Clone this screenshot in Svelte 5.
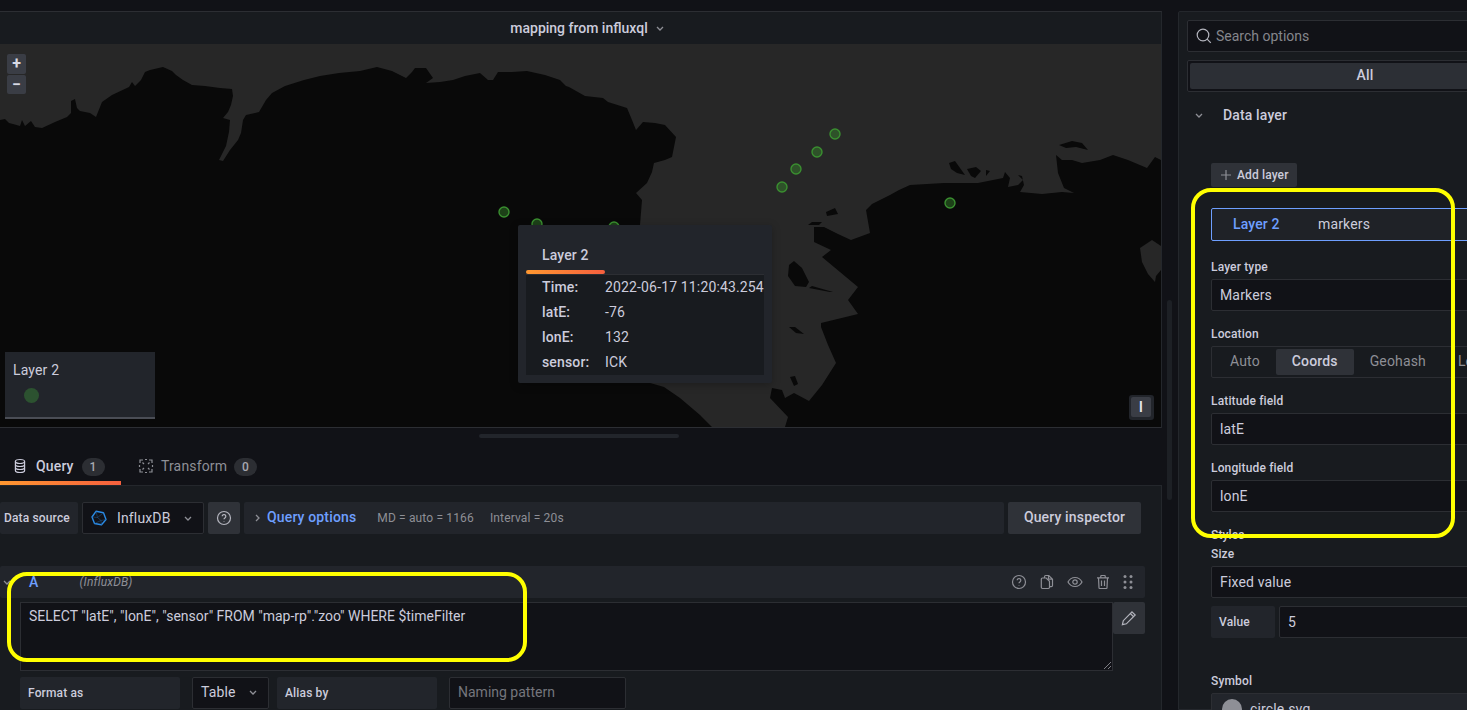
<script lang="ts">
	const markers = [
		[835, 134],
		[817, 152],
		[796, 169],
		[782, 187],
		[950, 203],
		[504, 212],
		[537, 224],
		[614, 227]
	];

	const tooltipRows = [
		['Time:', '2022-06-17 11:20:43.254'],
		['latE:', '-76'],
		['lonE:', '132'],
		['sensor:', 'ICK']
	];

	const westLand =
		'M0 120 L5 119 L9 123 L13 124 L20 126 L22 120 L25 126 L31 121 L35 127 L42 128 L55 122 L67 117 L71 113 L71 101 L75 99 L77 108 L80 111 L90 113 L96 117 L102 102 L112 95 L129 87 L132 82 L135 86 L141 80 L145 72 L150 70 L163 67 L172 71 L176 75 L183 80 L192 85 L205 86 L220 88 L232 89 L233 96 L231 105 L228 112 L223 118 L230 120 L229 132 L226 146 L219 160 L223 161 L230 150 L238 140 L241 133 L243 120 L246 115 L259 112 L266 100 L272 93 L285 86 L304 80 L320 76 L339 73 L360 71 L377 67 L392 71 L406 78 L412 72 L415 68 L426 68 L433 78 L426 83 L440 82 L453 80 L465 76 L480 73 L488 80 L493 80 L498 72 L512 72 L527 71 L545 75 L560 80 L566 86 L569 87 L585 96 L603 98 L608 102 L627 108 L632 120 L636 130 L643 122 L655 123 L665 125 L676 137 L672 157 L665 160 L654 163 L652 172 L647 183 L636 193 L642 200 L640 225 L640 380 L664 387 L680 398 L700 415 L712 427 L0 427 Z';

	const eastLand =
		'M785 427 L788 417 L770 398 L772 388 L782 390 L785 398 L794 393 L809 401 L822 385 L836 363 L828 345 L821 327 L821 323 L858 314 L848 300 L858 287 L840 272 L822 257 L831 250 L814 242 L814 227 L824 227 L838 234 L851 240 L870 233 L866 210 L872 204 L890 195 L899 190 L910 185 L944 183 L978 183 L1003 178 L1005 172 L1010 178 L1008 187 L1018 185 L1023 180 L1018 175 L1022 176 L1024 185 L1020 192 L1042 194 L1062 192 L1074 193 L1064 188 L1058 173 L1056 155 L1062 160 L1072 160 L1082 163 L1100 160 L1113 155 L1128 160 L1147 168 L1155 157 L1161 160 L1161 427 Z';

	const seaPatch = 'M1140 248 L1152 240 L1161 246 L1161 270 L1156 276 L1155 282 L1148 274 L1142 262 Z';

	const islands = [
		'M949 163 L955 161 L960 168 L965 175 L957 173 L951 169 Z',
		'M967 169 L976 167 L981 171 L975 178 L971 176 Z',
		'M986 170 L990 171 L986 176 Z',
		'M1059 145 L1072 141 L1082 143 L1088 150 L1076 147 L1066 148 Z',
		'M789 265 L794 261 L802 268 L809 282 L806 287 L795 286 L788 276 Z',
		'M789 327 L795 327 L804 334 L796 333 Z',
		'M790 377 L795 376 L798 384 L794 386 Z',
		'M809 288 L812 286 L833 292 L830 292 Z',
		'M812 222 L822 222 L819 225 L808 225 Z',
		'M826 212 L835 208 L838 214 L827 216 Z'
	];
</script>

<div class="screen">
	<div class="left">
		<section class="panel">
			<header class="panel-title">
				<span>mapping from influxql</span>
				<svg class="chev" viewBox="0 0 10 10" width="10" height="10"><path d="M2 4l3 3 3-3" /></svg>
			</header>

			<div class="map">
				<svg class="map-svg" viewBox="0 44 1161 383" preserveAspectRatio="none">
					<path d={westLand} fill="#090909" />
					<path d={eastLand} fill="#090909" />
					<path d={seaPatch} fill="#272727" />
					{#each islands as d}
						<path {d} fill="#090909" />
					{/each}
					{#each markers as [cx, cy]}
						<circle {cx} {cy} r="5" fill="#37872d" fill-opacity="0.45" stroke="#3a8f30" stroke-width="1.4" />
					{/each}
				</svg>

				<div class="zoom">
					<button type="button">+</button>
					<button type="button">−</button>
				</div>

				<div class="legend">
					<div class="legend-name">Layer 2</div>
					<span class="legend-dot"></span>
				</div>

				<div class="tooltip">
					<div class="tooltip-tab">Layer 2</div>
					<div class="tooltip-body">
						{#each tooltipRows as [label, value]}
							<div class="tooltip-row">
								<span class="tooltip-label">{label}</span>
								<span>{value}</span>
							</div>
						{/each}
					</div>
				</div>

				<div class="attribution"><span>I</span></div>
			</div>
		</section>

		<div class="splitter"><span></span></div>

		<nav class="tabs">
			<div class="tab active">
				<svg viewBox="0 0 16 16" width="16" height="16" class="icon">
					<ellipse cx="8" cy="3.5" rx="4.6" ry="2" />
					<path d="M3.4 3.5v9c0 1.1 2 2 4.6 2s4.6-.9 4.6-2v-9M3.4 6.5c0 1.1 2 2 4.6 2s4.6-.9 4.6-2M3.4 9.5c0 1.1 2 2 4.6 2s4.6-.9 4.6-2" />
				</svg>
				<span>Query</span>
				<span class="badge">1</span>
			</div>
			<div class="tab second">
				<svg viewBox="0 0 16 16" width="16" height="16" class="icon">
					<path d="M2 5V2h3M11 2h3v3M14 11v3h-3M5 14H2v-3M4.500 4.500L6 6M11.500 4.500L10 6M4.500 11.500L6 10M11.500 11.500L10 10M7 1.500h2M7 14.500h2M1.500 7v2M14.500 7v2" />
				</svg>
				<span>Transform</span>
				<span class="badge">0</span>
			</div>
		</nav>

		<section class="query-panel">
			<div class="source-row">
				<div class="label source-label">Data source</div>
				<div class="select source-select">
					<svg viewBox="0 0 16 16" width="16" height="16" class="influx">
						<path d="M5 1.300L12.500 2.800 15 9.500 10.500 14.800 3.500 13.500 1 7Z" />
						<path class="thin" d="M5 1.300L6.500 7.500 1 7M6.500 7.500L12.500 2.800M6.500 7.500L10 10.500 15 9.500M10 10.500L10.500 14.800M10 10.500L3.500 13.500" />
					</svg>
					<span>InfluxDB</span>
					<svg class="chev" viewBox="0 0 10 10" width="10" height="10"><path d="M2 4l3 3 3-3" /></svg>
				</div>
				<button type="button" class="icon-btn">
					<svg viewBox="0 0 16 16" width="16" height="16" class="icon light">
						<circle cx="8" cy="8" r="6.500" />
						<path d="M6.200 6.300a1.800 1.800 0 1 1 2.700 1.600c-.6.400-.9.700-.9 1.400M8 11.200v.6" />
					</svg>
				</button>
				<div class="options-bar">
					<svg class="chev side" viewBox="0 0 10 10" width="10" height="10"><path d="M4 2l3 3-3 3" /></svg>
					<span class="options-title">Query options</span>
					<span class="options-meta first">MD = auto = 1166</span>
					<span class="options-meta">Interval = 20s</span>
				</div>
				<button type="button" class="inspector">Query inspector</button>
			</div>

			<div class="query-head">
				<svg class="chev a-chev" viewBox="0 0 10 10" width="10" height="10"><path d="M2 4l3 3 3-3" /></svg>
				<span class="ref">A</span>
				<span class="ds-name">(InfluxDB)</span>
				<div class="head-icons">
					<svg viewBox="0 0 16 16" width="16" height="16" class="icon">
						<circle cx="8" cy="8" r="6.500" />
						<path d="M6.200 6.300a1.800 1.800 0 1 1 2.700 1.600c-.6.400-.9.700-.9 1.400M8 11.200v.6" />
					</svg>
					<svg viewBox="0 0 16 16" width="16" height="16" class="icon">
						<path d="M5.500 4V2.800c0-.7.500-1.300 1.200-1.300h3.100l3.700 3.700v6.300c0 .7-.5 1.200-1.200 1.200h-1.300M9.500 1.500v3.700h4" />
						<path d="M3.500 4h3.700l3.300 3.300v6c0 .7-.5 1.200-1.200 1.200H3.500c-.7 0-1.200-.5-1.200-1.200V5.200C2.300 4.500 2.800 4 3.500 4Z" />
					</svg>
					<svg viewBox="0 0 16 16" width="16" height="16" class="icon">
						<path d="M1 8c1.600-3 4-4.500 7-4.500S13.400 5 15 8c-1.600 3-4 4.500-7 4.500S2.600 11 1 8Z" />
						<circle cx="8" cy="8" r="2.200" />
					</svg>
					<svg viewBox="0 0 16 16" width="16" height="16" class="icon">
						<path d="M2 3.800h12M5.800 3.800V2c0-.3.200-.5.500-.5h3.400c.3 0 .5.200.5.500v1.800M3.500 3.800l.5 10c0 .4.300.7.700.7h6.600c.4 0 .7-.3.700-.7l.5-10M6.500 6.500v5.500M9.500 6.500v5.500" />
					</svg>
					<svg viewBox="0 0 16 16" width="16" height="16" class="dots">
						<circle cx="5" cy="2.500" r="1.500" /><circle cx="11" cy="2.500" r="1.500" />
						<circle cx="5" cy="8" r="1.500" /><circle cx="11" cy="8" r="1.500" />
						<circle cx="5" cy="13.500" r="1.500" /><circle cx="11" cy="13.500" r="1.500" />
					</svg>
				</div>
			</div>

			<div class="editor-row">
				<div class="editor">
					<span>SELECT "latE", "lonE", "sensor" FROM "map-rp"."zoo" WHERE $timeFilter</span>
					<svg class="resizer" viewBox="0 0 8 8" width="8" height="8"><path d="M1 8l7-7M5 8l3-3" /></svg>
				</div>
				<button type="button" class="icon-btn edit">
					<svg viewBox="0 0 16 16" width="16" height="16" class="icon light">
						<path d="M11 1.800l3.200 3.200-8.800 8.800-4 .9.900-4ZM9.300 3.500l3.200 3.200" />
					</svg>
				</button>
			</div>

			<div class="format-row">
				<div class="label format-label">Format as</div>
				<div class="select table-select">
					<span>Table</span>
					<svg class="chev" viewBox="0 0 10 10" width="10" height="10"><path d="M2 4l3 3 3-3" /></svg>
				</div>
				<div class="label alias-label">Alias by</div>
				<div class="select alias-input"><span>Naming pattern</span></div>
			</div>
		</section>
	</div>

	<div class="gutter"><span></span></div>

	<aside class="options">
		<div class="search">
			<svg viewBox="0 0 16 16" width="16" height="16" class="icon light">
				<circle cx="7" cy="7" r="5.800" />
				<path d="M11.200 11.200L14.800 14.800" />
			</svg>
			<span>Search options</span>
		</div>
		<div class="filter"><div>All</div></div>

		<div class="group-title">
			<svg class="chev" viewBox="0 0 10 10" width="10" height="10"><path d="M2 4l3 3 3-3" /></svg>
			<span>Data layer</span>
		</div>

		<div class="fields">
			<button type="button" class="add-layer">
				<svg viewBox="0 0 12 12" width="12" height="12" class="icon"><path d="M6 1v10M1 6h10" /></svg>
				Add layer
			</button>

			<div class="layer-row">
				<span class="layer-name">Layer 2</span>
				<span>markers</span>
			</div>

			<div class="field first"><div class="field-label">Layer type</div><div class="select wide">Markers</div></div>

			<div class="field">
				<div class="field-label">Location</div>
				<div class="radio">
					<span>Auto</span>
					<span class="on">Coords</span>
					<span>Geohash</span>
					<span>Lookup</span>
				</div>
			</div>

			<div class="field"><div class="field-label">Latitude field</div><div class="select wide">latE</div></div>
			<div class="field"><div class="field-label">Longitude field</div><div class="select wide">lonE</div></div>

			<div class="field-label styles-title">Styles</div>
			<div class="field size"><div class="field-label">Size</div><div class="select wide">Fixed value</div></div>

			<div class="value-row">
				<div class="label value-label">Value</div>
				<div class="select value-input">5</div>
			</div>

			<div class="field symbol">
				<div class="field-label">Symbol</div>
				<div class="select wide symbol-select"><span class="symbol-dot"></span>circle.svg</div>
			</div>
		</div>
	</aside>

	<div class="mark mark-query"></div>
	<div class="mark mark-layer"></div>
</div>

<style>
	:global(body) {
		background: #111217;
		overflow: hidden;
	}

	.screen {
		position: relative;
		display: flex;
		width: 1467px;
		height: 710px;
		overflow: hidden;
		background: #111217;
		color: #ccccdc;
		font-family: Roboto, 'Liberation Sans', sans-serif;
		font-size: 14px;
		letter-spacing: 0.01071em;
	}

	.left {
		flex: none;
		width: 1162px;
		padding-top: 11px;
		box-sizing: border-box;
	}

	.panel {
		border-top: 1px solid #2c2e33;
		border-right: 1px solid #24272c;
	}

	.panel-title {
		display: flex;
		align-items: center;
		justify-content: center;
		gap: 7px;
		height: 32px;
		padding: 0 0 1px 14px;
		box-sizing: border-box;
		background: #181b1f;
		font-weight: 500;
		letter-spacing: 0;
	}

	.chev {
		flex: none;
		fill: none;
		stroke: #8e8f96;
		stroke-width: 1.300;
	}

	.map {
		position: relative;
		height: 383px;
		background: #272727;
		border-bottom: 1px solid #2c2e33;
		overflow: hidden;
	}

	.map-svg {
		display: block;
		width: 100%;
		height: 100%;
	}

	.zoom {
		position: absolute;
		left: 7px;
		top: 10px;
		display: grid;
		gap: 1px;
	}

	.zoom button {
		width: 19px;
		height: 19.500px;
		padding: 0;
		border: none;
		border-radius: 2px;
		background: #3a3d45;
		color: #d8d9e4;
		font: 700 16px/19px Roboto, sans-serif;
	}

	.legend {
		position: absolute;
		left: 5px;
		top: 308px;
		width: 150px;
		height: 67px;
		box-sizing: border-box;
		padding: 10px 8px 0;
		background: #22252b;
		border-bottom: 2px solid #4a4d55;
	}

	.legend-name {
		line-height: 16px;
	}

	.legend-dot {
		display: block;
		width: 15px;
		height: 15px;
		margin: 10px 0 0 11px;
		border-radius: 50%;
		background: #2c5230;
	}

	.tooltip {
		position: absolute;
		left: 518px;
		top: 181px;
		width: 254px;
		height: 158px;
		box-sizing: border-box;
		padding: 0 8px;
		background: #22252b;
		box-shadow: 0 2px 8px rgb(0 0 0 / 0.25);
		border-radius: 2px;
	}

	.tooltip-tab {
		position: relative;
		height: 49px;
		padding: 21px 0 0 16px;
		box-sizing: border-box;
		line-height: 18px;
		font-weight: 500;
	}

	.tooltip-tab::after {
		content: '';
		position: absolute;
		left: 0;
		bottom: 0;
		width: 79px;
		height: 4px;
		border-radius: 2px;
		background: linear-gradient(90deg, #ff9830, #f55f3e);
	}

	.tooltip-body {
		height: 101px;
		box-sizing: border-box;
		padding-left: 16px;
		background: #181b1f;
		border-top: 1px solid #2c2e33;
		white-space: nowrap;
	}

	.tooltip-row {
		display: flex;
		height: 25px;
		line-height: 25px;
	}

	.tooltip-label {
		width: 63px;
		font-weight: 500;
	}

	.attribution {
		position: absolute;
		left: 1129px;
		top: 351px;
		display: flex;
		padding: 2px 3px 3px 2px;
		background: #22252b;
		border-radius: 3px;
	}

	.attribution span {
		width: 20px;
		height: 20px;
		border-radius: 2px;
		background: #3a3d45;
		color: #e6e7f0;
		text-align: center;
		font: 500 15px/20px Roboto, sans-serif;
	}

	.splitter {
		display: flex;
		justify-content: center;
		height: 20px;
		padding: 6px 4px 0 0;
		box-sizing: border-box;
	}

	.splitter span {
		width: 200px;
		height: 4px;
		background: #22252b;
		border-radius: 2px;
	}

	.tabs {
		display: flex;
		height: 37px;
	}

	.tab {
		display: flex;
		align-items: center;
		gap: 8px;
		height: 37px;
		box-sizing: border-box;
		padding: 0 16px 2px 12px;
		color: #8e8f96;
	}

	.tab.second {
		padding-left: 17px;
		gap: 7px;
	}

	.tab.active {
		width: 121px;
		padding: 2px 0 0 12px;
		color: #ccccdc;
		font-weight: 500;
		border-bottom: 4px solid;
		border-image: linear-gradient(90deg, #ff9830, #f55f3e) 1;
	}

	.icon {
		flex: none;
		fill: none;
		stroke: #8e8f96;
		stroke-width: 1.200;
	}

	.icon.light {
		stroke: #b4b5be;
	}

	.tab.active .icon {
		stroke: #ccccdc;
	}

	.badge {
		width: 23px;
		height: 18px;
		margin-top: 3px;
		border-radius: 9px;
		background: #2c2e33;
		color: #a7a8b0;
		text-align: center;
		font-size: 12px;
		font-weight: 500;
		line-height: 18px;
	}

	.query-panel {
		height: 225px;
		box-sizing: border-box;
		padding-top: 16px;
		padding-right: 20px;
		background: #181b1f;
		border-top: 1px solid #24272c;
		border-right: 1px solid #24272c;
	}

	.source-row {
		display: flex;
		height: 32px;
	}

	.label {
		flex: none;
		display: flex;
		align-items: center;
		box-sizing: border-box;
		background: #22252b;
		border-radius: 2px;
		font-size: 12px;
		font-weight: 500;
	}

	.source-label {
		width: 78px;
		padding: 0 0 1px 4px;
	}

	.select {
		display: flex;
		align-items: center;
		box-sizing: border-box;
		height: 32px;
		background: #111217;
		border: 1px solid #2c2e33;
		border-radius: 2px;
	}

	.source-select {
		width: 122px;
		margin-left: 4px;
		padding: 0 0 1px 8px;
	}

	.influx {
		flex: none;
		fill: none;
		stroke: #2a8be6;
		stroke-width: 1.400;
		stroke-linejoin: round;
	}

	.influx .thin {
		stroke-width: 0.500;
		stroke: #22598f;
	}

	.source-select span {
		margin: 0 12px 0 10px;
	}

	.icon-btn {
		flex: none;
		display: flex;
		align-items: center;
		justify-content: center;
		width: 32px;
		height: 32px;
		padding: 0;
		border: none;
		border-radius: 2px;
		background: #2f3238;
	}

	.source-row .icon-btn {
		margin-left: 4px;
	}

	.options-bar {
		display: flex;
		align-items: center;
		width: 760px;
		margin-left: 4px;
		padding-left: 8px;
		box-sizing: border-box;
		background: #22252b;
		border-radius: 2px;
	}

	.options-title {
		margin: 0 0 2px 5px;
		color: #6e9fff;
		font-weight: 500;
	}

	.options-meta {
		margin-left: 16px;
		color: #8e8f96;
		font-size: 12px;
	}

	.options-meta.first {
		margin-left: 21px;
	}

	.inspector {
		flex: none;
		width: 133px;
		margin-left: 4px;
		padding: 0 0 2px;
		border: none;
		border-radius: 2px;
		background: #2f3238;
		color: #ccccdc;
		font: 500 14px Roboto, sans-serif;
		letter-spacing: 0.01071em;
	}

	.query-head {
		position: relative;
		display: flex;
		align-items: center;
		height: 32px;
		margin: 32px -4px 0 0;
		background: #22252b;
		border-radius: 2px;
	}

	.a-chev {
		margin-left: 2px;
	}

	.ref {
		margin-left: 17px;
		color: #6e9fff;
		font-weight: 500;
	}

	.ds-name {
		margin-left: 41px;
		color: #8e8f96;
		font-size: 12px;
		font-style: italic;
	}

	.head-icons {
		display: flex;
		align-items: center;
		gap: 12px;
		margin-left: auto;
		margin-right: 9px;
	}

	.dots {
		fill: #8e8f96;
		margin-left: -3px;
	}

	.editor-row {
		display: flex;
		margin: 4px -4px 0 20px;
	}

	.editor {
		position: relative;
		flex: 1;
		height: 69px;
		box-sizing: border-box;
		padding: 4px 8px;
		background: #111217;
		border: 1px solid #2c2e33;
		line-height: 18px;
		letter-spacing: 0;
	}

	.resizer {
		position: absolute;
		right: 1px;
		bottom: 1px;
		fill: none;
		stroke: #9a9ba2;
		stroke-width: 0.800;
	}

	.format-row {
		display: flex;
		height: 32px;
		margin: 6px 0 0 20px;
	}

	.format-label,
	.alias-label {
		width: 160px;
		padding-left: 8px;
	}

	.table-select {
		width: 77px;
		margin-left: 12px;
		padding: 0 0 2px 8px;
		gap: 12px;
	}

	.alias-label {
		margin-left: 8px;
	}

	.alias-input {
		width: 177px;
		margin-left: 12px;
		padding: 0 0 2px 8px;
		color: #75767d;
		letter-spacing: 0;
	}

	.gutter {
		flex: none;
		width: 16px;
		padding: 300px 0 0 5px;
		box-sizing: border-box;
	}

	.gutter span {
		display: block;
		width: 5px;
		height: 200px;
		border-radius: 3px;
		background: #1d2025;
	}

	.options {
		flex: none;
		width: 400px;
		height: 699px;
		margin-top: 11px;
		box-sizing: border-box;
		padding: 8px 0 0 8px;
		background: #181b1f;
		border: 1px solid #24272c;
		border-radius: 2px 0 0 0;
	}

	.search {
		display: flex;
		align-items: center;
		gap: 4px;
		height: 32px;
		padding-left: 8px;
		box-sizing: border-box;
		background: #111217;
		border: 1px solid #2c2e33;
		border-radius: 2px;
		color: #85868c;
		letter-spacing: 0;
	}

	.filter {
		height: 32px;
		margin-top: 8px;
		padding: 2px;
		box-sizing: border-box;
		background: #111217;
		border: 1px solid #2c2e33;
		border-radius: 2px;
		width: 356px;
	}

	.filter div {
		height: 26px;
		line-height: 25px;
		border-radius: 2px;
		background: #2c2f35;
		text-align: center;
		font-weight: 500;
	}

	.group-title {
		display: flex;
		align-items: center;
		height: 20px;
		margin: 13px 0 0 7px;
		font-weight: 500;
	}

	.group-title span {
		margin-left: 19px;
	}

	.fields {
		padding: 38px 0 0 24px;
	}

	.add-layer {
		display: flex;
		align-items: center;
		gap: 5px;
		height: 24px;
		width: 86px;
		padding: 0 0 0 9px;
		border: none;
		border-radius: 2px;
		background: #2f3238;
		color: #ccccdc;
		font: 500 12px Roboto, sans-serif;
		letter-spacing: 0.01071em;
	}

	.layer-row {
		display: flex;
		align-items: center;
		height: 33px;
		margin-top: 21px;
		padding: 0 0 1px 21px;
		box-sizing: border-box;
		background: #1f2227;
		border: 1px solid #6e9fff;
		border-radius: 2px;
	}

	.layer-name {
		width: 85px;
		color: #6e9fff;
		font-weight: 500;
	}

	.field {
		margin-top: 16px;
	}

	.field.first {
		margin-top: 19px;
	}

	.field-label {
		height: 19px;
		font-size: 12px;
		font-weight: 500;
		line-height: 15px;
	}

	.select.wide {
		padding-left: 8px;
	}

	.radio {
		display: flex;
		align-items: center;
		height: 32px;
		padding-left: 2px;
		box-sizing: border-box;
		border: 1px solid #2c2e33;
		border-radius: 2px;
		color: #8e8f96;
		white-space: nowrap;
	}

	.radio span {
		height: 26px;
		padding: 0 16px;
		line-height: 25px;
		border-radius: 2px;
	}

	.radio .on {
		background: #2f3238;
		color: #ccccdc;
		font-weight: 500;
	}

	.styles-title {
		margin-top: 16px;
	}

	.field.size {
		margin-top: 0;
	}

	.value-row {
		display: flex;
		height: 32px;
		margin-top: 8px;
	}

	.value-label {
		width: 64px;
		padding-left: 8px;
	}

	.value-input {
		flex: 1;
		margin-left: 4px;
		padding-left: 8px;
	}

	.field.symbol {
		margin-top: 36px;
	}

	.symbol-select {
		background: #22252b;
		gap: 8px;
		overflow: visible;
	}

	.symbol-dot {
		width: 20px;
		height: 20px;
		border-radius: 50%;
		background: #8e8f96;
		margin-left: 2px;
	}

	.mark {
		position: absolute;
		box-sizing: border-box;
		border: 4px solid #ffff00;
		border-radius: 20px;
	}

	.mark-query {
		left: 7px;
		top: 572px;
		width: 520px;
		height: 90px;
	}

	.mark-layer {
		left: 1191px;
		top: 188px;
		width: 264px;
		height: 350px;
	}
</style>
